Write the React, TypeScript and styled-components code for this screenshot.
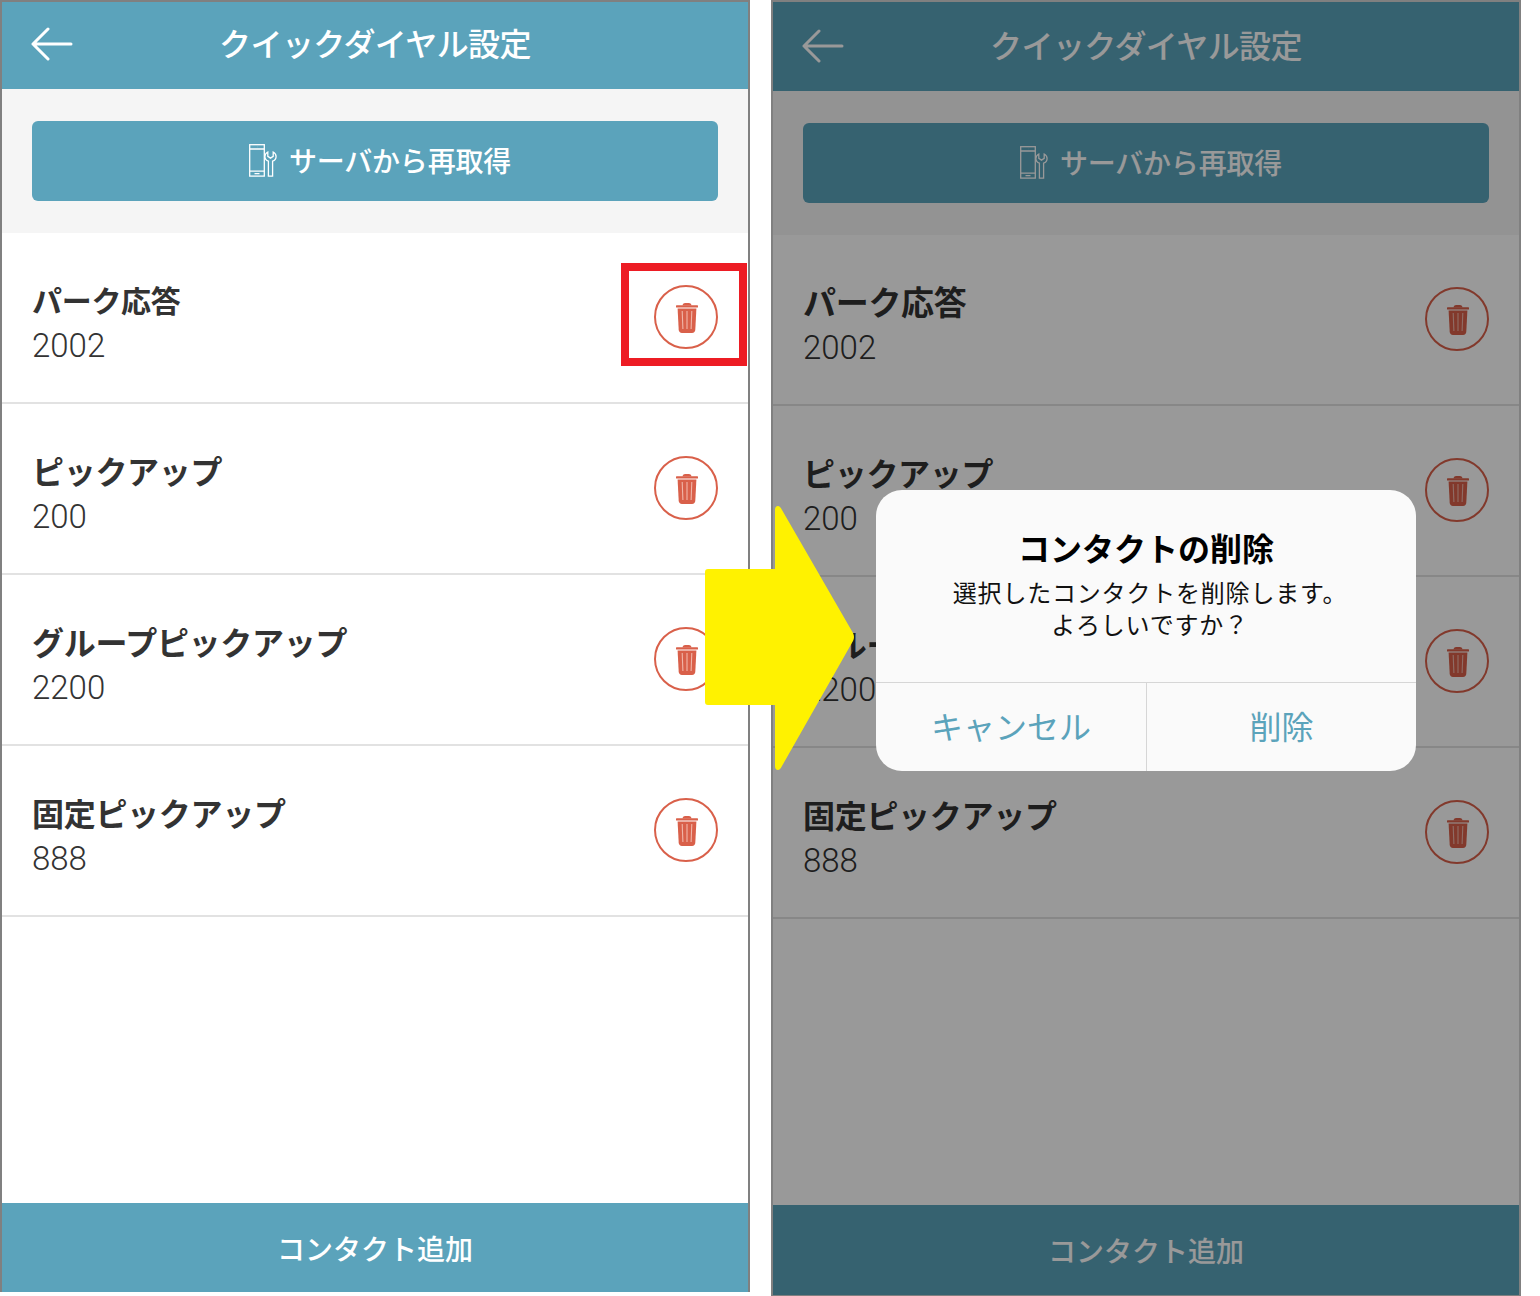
import React from 'react';
import styled, { createGlobalStyle } from 'styled-components';

const GlobalStyle = createGlobalStyle`
  html, body {
    margin: 0;
    padding: 0;
    background: #fff;
  }
  * {
    box-sizing: border-box;
  }
  body {
    font-family: "Noto Sans CJK JP", "Liberation Sans", sans-serif;
  }
`;

const Page = styled.div`
  position: relative;
  display: flex;
  align-items: flex-start;
  gap: 21px;
  width: 1540px;
  height: 1296px;
`;

const Phone = styled.div<{ $shifted?: boolean }>`
  position: relative;
  display: flex;
  flex-direction: column;
  width: 750px;
  height: ${({ $shifted }) => ($shifted ? '1296px' : '1292px')};
  border-style: solid;
  border-color: #808080;
  border-width: ${({ $shifted }) => ($shifted ? '2px 2px 1px' : '2px 2px 0')};
  background: #fff;
`;

const Header = styled.header<{ $shifted?: boolean }>`
  position: relative;
  display: flex;
  align-items: center;
  justify-content: center;
  flex: none;
  height: ${({ $shifted }) => ($shifted ? '89px' : '87px')};
  padding-bottom: ${({ $shifted }) => ($shifted ? '5px' : '7px')};
  background: #5ba3bb;
`;

const Title = styled.h1`
  margin: 0;
  font-size: 32px;
  font-weight: 500;
  line-height: 44px;
  letter-spacing: -0.6px;
  color: #fff;
`;

const BackIcon = styled.svg`
  position: absolute;
  left: 29px;
  bottom: 28px;
  width: 42px;
  height: 34px;
`;

const Band = styled.div`
  flex: none;
  padding: 32px 30px;
  background: #f5f5f5;
`;

const RefreshButton = styled.button`
  display: flex;
  align-items: center;
  justify-content: center;
  gap: 11px;
  width: 100%;
  height: 80px;
  padding: 0 0 2px 10px;
  border: 0;
  border-radius: 6px;
  background: #5ba3bb;
  color: #fff;
  font-family: inherit;
  font-size: 28px;
  font-weight: 500;
  line-height: 40px;
  letter-spacing: -0.2px;
`;

const List = styled.ul`
  flex: 1;
  margin: 0;
  padding: 0;
  list-style: none;
`;

const Row = styled.li`
  display: flex;
  align-items: center;
  justify-content: space-between;
  height: 171px;
  padding: 0 30px 1px;
  border-bottom: 2px solid #e2e2e2;
`;

const Contact = styled.div`
  margin-top: 11px;
`;

const Name = styled.div<{ $size: number }>`
  font-size: ${({ $size }) => $size}px;
  font-weight: 700;
  line-height: 42px;
  letter-spacing: -0.3px;
  color: #333;
`;

const Extension = styled.div`
  padding-top: 5px;
  font-family: Roboto, "Liberation Sans", sans-serif;
  font-size: 33px;
  font-weight: 300;
  line-height: 42px;
  color: #333;
`;

const DeleteButton = styled.button`
  display: flex;
  align-items: center;
  justify-content: center;
  width: 64px;
  height: 64px;
  padding: 2px 0 0 2px;
  border: 2px solid #d9604a;
  border-radius: 50%;
  background: none;
`;

const Footer = styled.footer<{ $shifted?: boolean }>`
  display: flex;
  align-items: center;
  justify-content: center;
  flex: none;
  height: ${({ $shifted }) => ($shifted ? '90px' : '89px')};
  background: #5ba3bb;
  color: #fff;
  font-size: 28px;
  font-weight: 500;
`;

const Overlay = styled.div`
  position: absolute;
  inset: 0;
  display: flex;
  align-items: center;
  justify-content: center;
  padding-bottom: 36px;
  background: rgba(0, 0, 0, 0.4);
`;

const Dialog = styled.div`
  display: flex;
  flex-direction: column;
  width: 540px;
  height: 281px;
  border-radius: 26px;
  background: #fafafa;
  overflow: hidden;
`;

const DialogBody = styled.div`
  flex: 1;
  padding-top: 34px;
  text-align: center;
`;

const DialogTitle = styled.div`
  font-size: 32px;
  font-weight: 700;
  line-height: 46px;
  color: #000;
`;

const DialogText = styled.div`
  margin-top: 6px;
  padding-left: 8px;
  font-size: 24px;
  line-height: 32px;
  letter-spacing: 0.8px;
  color: #111;
`;

const DialogActions = styled.div`
  display: grid;
  grid-template-columns: 270px 270px;
  flex: none;
  height: 89px;
  border-top: 1px solid #d6d6d6;
`;

const DialogAction = styled.button`
  padding: 0 0 4px;
  border: 0;
  background: none;
  color: #5ba3bb;
  font-family: inherit;
  font-size: 32px;
  line-height: 44px;
  & + & {
    border-left: 1px solid #d6d6d6;
  }
`;

const Highlight = styled.div`
  position: absolute;
  left: 621px;
  top: 263px;
  width: 126px;
  height: 103px;
  border: 8px solid #ed1c24;
`;

const NextArrow = styled.svg`
  position: absolute;
  left: 705px;
  top: 505px;
  width: 150px;
  height: 266px;
`;

const contacts = [
  { name: 'パーク応答', number: '2002' },
  { name: 'ピックアップ', number: '200' },
  { name: 'グループピックアップ', number: '2200' },
  { name: '固定ピックアップ', number: '888' },
];

const TrashIcon = () => (
  <svg width="22" height="30" viewBox="0 0 22 30" aria-hidden="true">
    <path d="M6.5 2.4C6.8 .8 8 0 9 0h4c1 0 2.200 .8 2.500 2.400z" fill="#d9604a" />
    <rect x="0" y="2.200" width="22" height="2.400" rx="0.6" fill="#d9604a" />
    <path
      d="M1.600 5.600h18.800l-1.100 21.200c-.1 1.900-1.300 3.200-3.200 3.200H5.900c-1.900 0-3.100-1.300-3.200-3.200z"
      fill="#d9604a"
    />
    <path
      d="M6.200 8l.7 18M11 8v18M15.800 8l-.7 18"
      stroke="#f0b5a8"
      strokeWidth="1.100"
      fill="none"
    />
  </svg>
);

const PhoneToolIcon = () => (
  <svg width="29" height="33" viewBox="0 0 29 33" fill="none" stroke="#fff" strokeWidth="1.300" aria-hidden="true">
    <rect x="0.700" y="0.700" width="14.600" height="31.400" />
    <path d="M.7 5h14.600M.7 27.200h14.600M5.500 29.700h5" />
    <path d="M8 2.800h.1" />
    <path d="M18.800 8c-1.900 1-2.900 2.600-2.900 4.500 0 2.200 1.300 3.900 3.500 4.700v15h4.200v-15c2.200-.8 3.500-2.500 3.500-4.700 0-1.900-1-3.500-2.900-4.500v4.300l-2.700 1.800-2.700-1.800z" />
  </svg>
);

const Screen = ({ shifted }: { shifted?: boolean }) => {
  const firstSize = shifted ? 33 : 30;
  return (
    <>
      <Header $shifted={shifted}>
        <BackIcon viewBox="0 0 42 34" fill="none" stroke="#fff" strokeWidth="3" strokeLinecap="round" strokeLinejoin="round">
          <path d="M2 17h38M17 2L2 17l15 15" />
        </BackIcon>
        <Title>クイックダイヤル設定</Title>
      </Header>
      <Band>
        <RefreshButton>
          <PhoneToolIcon />
          サーバから再取得
        </RefreshButton>
      </Band>
      <List>
        {contacts.map((contact, index) => (
          <Row key={contact.name}>
            <Contact>
              <Name $size={index === 0 ? firstSize : 32}>{contact.name}</Name>
              <Extension>{contact.number}</Extension>
            </Contact>
            <DeleteButton>
              <TrashIcon />
            </DeleteButton>
          </Row>
        ))}
      </List>
      <Footer $shifted={shifted}>コンタクト追加</Footer>
    </>
  );
};

const App = () => {
  return (
    <Page>
      <GlobalStyle />
      <Phone>
        <Screen />
      </Phone>
      <Phone $shifted>
        <Screen shifted />
        <Overlay>
          <Dialog>
            <DialogBody>
              <DialogTitle>コンタクトの削除</DialogTitle>
              <DialogText>
                選択したコンタクトを削除します。
                <br />
                よろしいですか？
              </DialogText>
            </DialogBody>
            <DialogActions>
              <DialogAction>キャンセル</DialogAction>
              <DialogAction>削除</DialogAction>
            </DialogActions>
          </Dialog>
        </Overlay>
      </Phone>
      <Highlight />
      <NextArrow viewBox="0 0 150 266">
        <path
          d="M3 64H70V5Q70 1 73 1Q75 1 77 5L148 128Q150 132 148 136L77 261Q75 265 73 265Q70 265 70 261V200H3Q0 200 0 197V67Q0 64 3 64Z"
          fill="#fff200"
        />
      </NextArrow>
    </Page>
  );
};

export default App;
